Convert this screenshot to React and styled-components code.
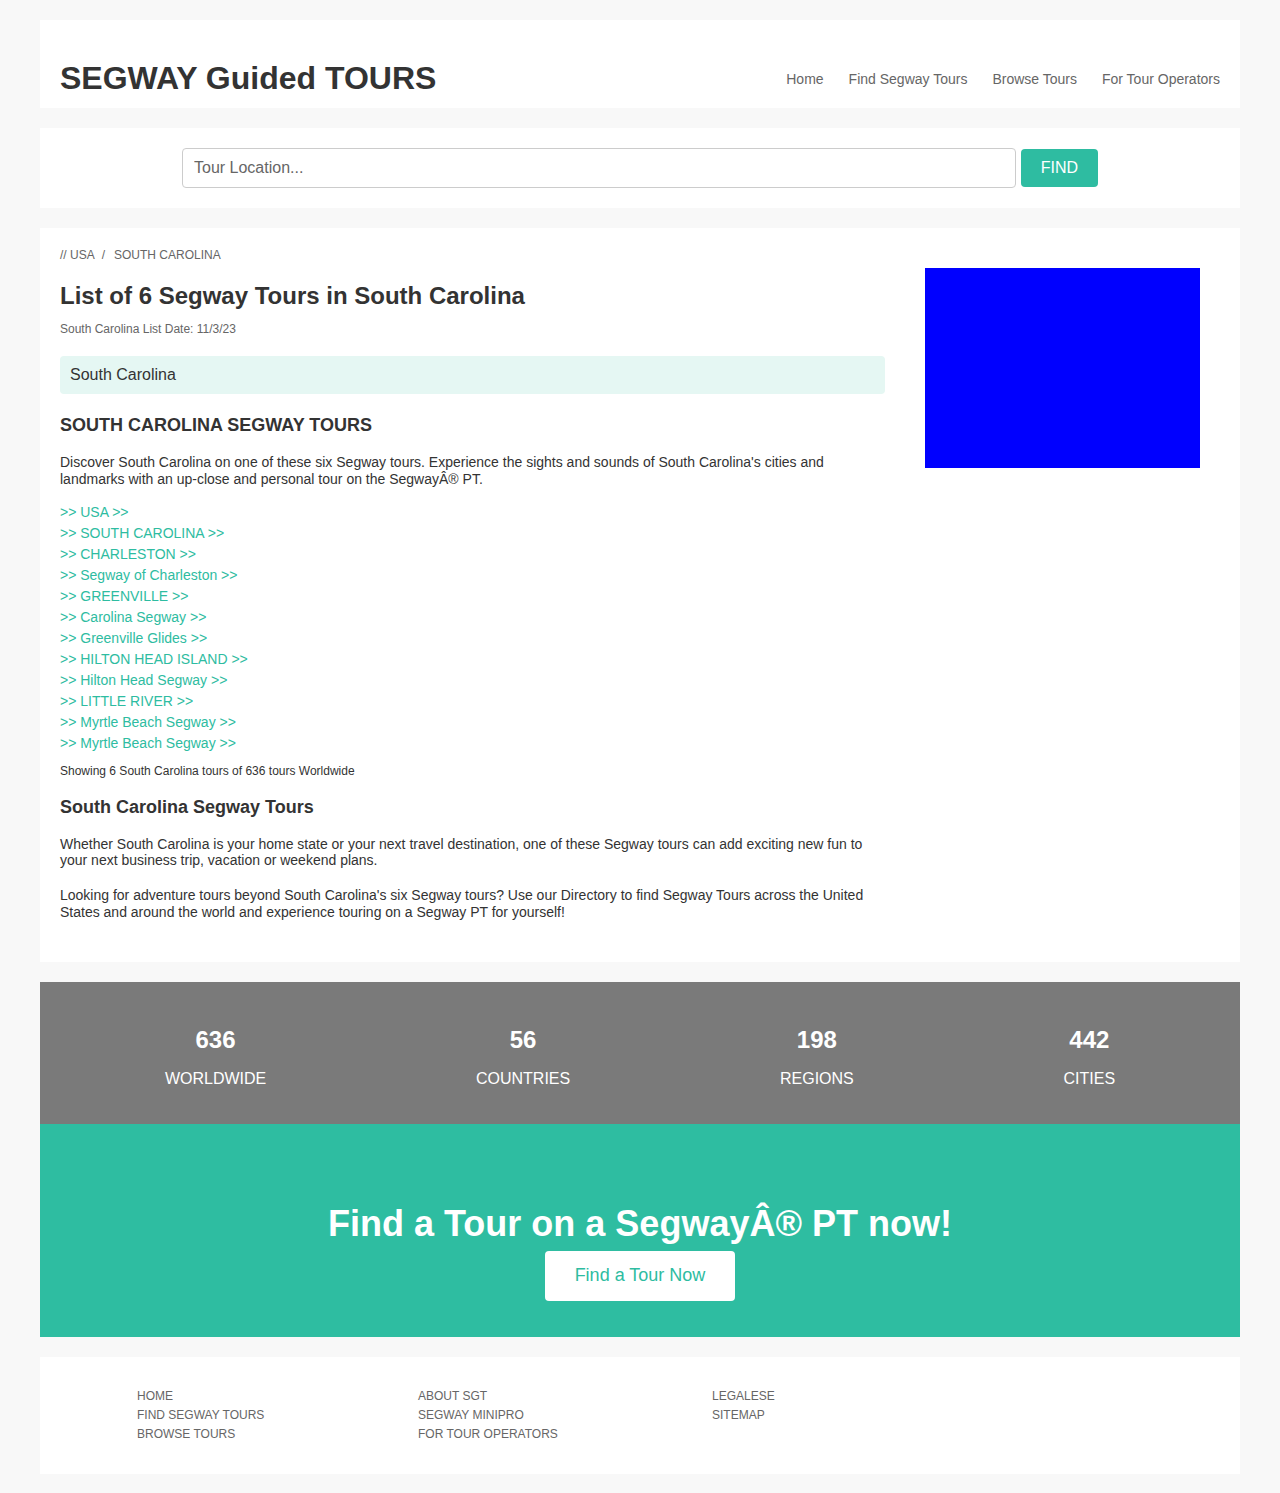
import React from "react";
import styled, { createGlobalStyle } from "styled-components";

const GlobalStyle = createGlobalStyle`
  body {
    margin: 0;
    background: #f8f8f8;
    font-family: "Liberation Sans", Arial, Helvetica, sans-serif;
    color: #333;
  }
`;

const Page = styled.div`
  width: 1200px;
  margin: 0 auto;
  padding: 20px 0;
  display: flex;
  flex-direction: column;
  gap: 20px;
`;

const Box = styled.div`
  background: #fff;
`;

const Header = styled(Box)`
  display: flex;
  justify-content: space-between;
  align-items: flex-end;
  height: 88px;
  box-sizing: border-box;
  padding: 0 20px 10px;
`;

const Logo = styled.h1`
  margin: 0;
  font-size: 32px;
  font-weight: bold;
  color: #333;
  line-height: 40px;
`;

const Nav = styled.nav`
  display: flex;
  gap: 25px;
  padding-bottom: 11px;
`;

const NavLink = styled.a`
  font-size: 14px;
  color: #666;
  text-decoration: none;
`;

const SearchBar = styled(Box)`
  display: flex;
  justify-content: center;
  align-items: center;
  gap: 5px;
  padding: 20px 0;
`;

const SearchInput = styled.input`
  width: 834px;
  height: 40px;
  box-sizing: border-box;
  border: 1px solid #ccc;
  border-radius: 4px;
  padding: 0 11px;
  font-family: inherit;
  font-size: 16px;
  color: #333;
  &::placeholder {
    color: #666;
  }
`;

const FindButton = styled.button`
  height: 38px;
  width: 77px;
  border: none;
  border-radius: 4px;
  background: #2ebca1;
  color: #fff;
  font-family: inherit;
  font-size: 16px;
`;

const Main = styled(Box)`
  display: flex;
  gap: 40px;
  padding: 20px 20px 41px;
`;

const Content = styled.div`
  width: 825px;
`;

const Side = styled.aside`
  padding-top: 20px;
`;

const Ad = styled.div`
  width: 275px;
  height: 200px;
  background: #0000ff;
`;

const Breadcrumb = styled.div`
  font-size: 12px;
  color: #666;
  line-height: 14px;

  span {
    margin: 0 9px 0 7px;
  }
`;

const Title = styled.h2`
  margin: 20px 0 0;
  font-size: 24px;
  line-height: 28px;
  font-weight: bold;
`;

const Meta = styled.p`
  margin: ${(p) => p.$top || "12px"} 0 0;
  font-size: 12px;
  line-height: 14px;
  color: ${(p) => p.$color || "#666"};
`;

const Region = styled.div`
  margin-top: 20px;
  background: #e5f7f3;
  border-radius: 4px;
  padding: 10px;
  font-size: 16px;
  line-height: 18px;
`;

const SectionTitle = styled.h3`
  margin: ${(p) => p.$top || "20px"} 0 0;
  font-size: 18px;
  line-height: 22px;
  font-weight: bold;
`;

const Text = styled.p`
  margin: ${(p) => p.$top || "18px"} 0 0;
  font-size: 14px;
  line-height: 1.2;
`;

const LinkList = styled.ul`
  list-style: none;
  margin: 14px 0 0;
  padding: 0;
`;

const TourLink = styled.a`
  display: block;
  font-size: 14px;
  line-height: 21px;
  color: #2ebca1;
  text-decoration: none;
`;

const Stats = styled.div`
  display: flex;
  justify-content: space-around;
  background: #7a7a7a;
  padding: 44px 20px 36px;
  margin-bottom: -20px;
`;

const Stat = styled.div`
  display: flex;
  flex-direction: column;
  align-items: center;
  gap: 16px;
  color: #fff;
`;

const StatNum = styled.div`
  font-size: 24px;
  font-weight: bold;
  line-height: 28px;
`;

const StatLabel = styled.div`
  font-size: 16px;
  line-height: 18px;
`;

const Cta = styled.div`
  background: #2ebda1;
  display: flex;
  flex-direction: column;
  align-items: center;
  padding: 79px 0 36px;
`;

const CtaTitle = styled.h2`
  margin: 0;
  color: #fff;
  font-size: 36px;
  line-height: 42px;
  font-weight: bold;
`;

const CtaButton = styled.a`
  margin-top: 6px;
  width: 190px;
  height: 50px;
  display: flex;
  align-items: center;
  justify-content: center;
  background: #fff;
  border-radius: 4px;
  color: #2ebca1;
  font-size: 18px;
  text-decoration: none;
`;

const Footer = styled(Box)`
  display: grid;
  grid-template-columns: 281px 294px 1fr;
  padding: 30px 0 30px 97px;
`;

const FooterCol = styled.div`
  display: flex;
  flex-direction: column;
`;

const FooterLink = styled.a`
  font-size: 12px;
  line-height: 19px;
  color: #666;
  text-decoration: none;
`;

const links = [
  "USA",
  "SOUTH CAROLINA",
  "CHARLESTON",
  "Segway of Charleston",
  "GREENVILLE",
  "Carolina Segway",
  "Greenville Glides",
  "HILTON HEAD ISLAND",
  "Hilton Head Segway",
  "LITTLE RIVER",
  "Myrtle Beach Segway",
  "Myrtle Beach Segway",
];

const stats = [
  ["636", "WORLDWIDE"],
  ["56", "COUNTRIES"],
  ["198", "REGIONS"],
  ["442", "CITIES"],
];

const footerCols = [
  ["HOME", "FIND SEGWAY TOURS", "BROWSE TOURS"],
  ["ABOUT SGT", "SEGWAY MINIPRO", "FOR TOUR OPERATORS"],
  ["LEGALESE", "SITEMAP"],
];

export default function App() {
  return (
    <>
      <GlobalStyle />
      <Page>
        <Header>
          <Logo>SEGWAY Guided TOURS</Logo>
          <Nav>
            <NavLink href="#">Home</NavLink>
            <NavLink href="#">Find Segway Tours</NavLink>
            <NavLink href="#">Browse Tours</NavLink>
            <NavLink href="#">For Tour Operators</NavLink>
          </Nav>
        </Header>

        <SearchBar>
          <SearchInput placeholder="Tour Location..." />
          <FindButton>FIND</FindButton>
        </SearchBar>

        <Main>
          <Content>
            <Breadcrumb>
              // USA<span>/</span>SOUTH CAROLINA
            </Breadcrumb>
            <Title>List of 6 Segway Tours in South Carolina</Title>
            <Meta>South Carolina List Date: 11/3/23</Meta>
            <Region>South Carolina</Region>
            <SectionTitle>SOUTH CAROLINA SEGWAY TOURS</SectionTitle>
            <Text>
              Discover South Carolina on one of these six Segway tours. Experience the sights and sounds of
              South Carolina's cities and landmarks with an up-close and personal tour on the SegwayÂ® PT.
            </Text>
            <LinkList>
              {links.map((l, i) => (
                <li key={i}>
                  <TourLink href="#">&gt;&gt; {l} &gt;&gt;</TourLink>
                </li>
              ))}
            </LinkList>
            <Meta $top="10px" $color="#333">Showing 6 South Carolina tours of 636 tours Worldwide</Meta>
            <SectionTitle $top="18px">South Carolina Segway Tours</SectionTitle>
            <Text>
              Whether South Carolina is your home state or your next travel destination, one of these Segway
              tours can add exciting new fun to your next business trip, vacation or weekend plans.
            </Text>
            <Text>
              Looking for adventure tours beyond South Carolina's six Segway tours? Use our Directory to find
              Segway Tours across the United States and around the world and experience touring on a Segway
              PT for yourself!
            </Text>
          </Content>
          <Side>
            <Ad />
          </Side>
        </Main>

        <div>
          <Stats>
            {stats.map(([n, l]) => (
              <Stat key={l}>
                <StatNum>{n}</StatNum>
                <StatLabel>{l}</StatLabel>
              </Stat>
            ))}
          </Stats>
        </div>

        <Cta>
          <CtaTitle>Find a Tour on a SegwayÂ® PT now!</CtaTitle>
          <CtaButton href="#">Find a Tour Now</CtaButton>
        </Cta>

        <Footer>
          {footerCols.map((col, i) => (
            <FooterCol key={i}>
              {col.map((f) => (
                <FooterLink key={f} href="#">{f}</FooterLink>
              ))}
            </FooterCol>
          ))}
        </Footer>
      </Page>
    </>
  );
}
